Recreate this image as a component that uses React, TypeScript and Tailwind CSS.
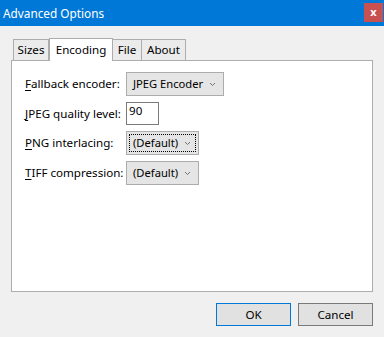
import React from "react";

const font = { fontFamily: '"Noto Sans", "Segoe UI", sans-serif' };

function Chevron() {
  return (
    <svg width="7" height="5" viewBox="0 0 7 5" className="shrink-0">
      <path d="M1 1 L3.5 3.5 L6 1" fill="none" stroke="#707070" strokeWidth="1" />
    </svg>
  );
}

function Label({ k, rest }: { k: string; rest: string }) {
  return (
    <span className="whitespace-nowrap">
      <span className="underline underline-offset-2">{k}</span>
      {rest}
    </span>
  );
}

function Combo({ text, w, focus }: { text: string; w: string; focus?: boolean }) {
  return (
    <div className={`${w} h-[24px] border border-[#acacac] bg-[#e5e5e5] p-[2px] flex`}>
      <div
        className={`flex-1 flex items-center justify-between pl-[3px] pr-[4px] whitespace-nowrap text-[11.2px] ${
          focus ? "border border-dotted border-black" : "border border-transparent"
        }`}
      >
        <span>{text}</span>
        <Chevron />
      </div>
    </div>
  );
}

export default function App() {
  return (
    <div className="w-[384px] h-[337px] bg-[#f0f0f0] flex flex-col text-[11.6px] text-black" style={font}>
      <div className="h-[26px] bg-[#0078d7] flex items-start justify-between">
        <span className="text-white pl-[3px] pt-[5px] text-[11.8px]">Advanced Options</span>
        <div className="mt-[3px] mr-[1px] w-[19px] h-[19px] bg-[#c75050] flex items-center justify-center text-white font-bold text-[11px]">
          x
        </div>
      </div>

      <div className="mt-[11px] mx-[11px] flex flex-col">
        <div className="flex items-end pl-[2px] h-[23px]">
          <div className="w-[36px] h-[21px] border border-b-0 border-[#adadad] bg-[#ebebeb] flex items-center justify-center">
            Sizes
          </div>
          <div className="w-[64px] h-[23px] -mb-px border border-b-0 border-[#adadad] bg-white flex items-start pt-[2px] justify-center relative z-10">
            Encoding
          </div>
          <div className="w-[29px] h-[21px] border border-b-0 border-l-0 border-[#adadad] bg-[#ebebeb] flex items-center justify-center">
            File
          </div>
          <div className="w-[44px] h-[21px] border border-b-0 border-l-0 border-[#adadad] bg-[#ebebeb] flex items-center justify-center">
            About
          </div>
        </div>
        <div className="h-[232px] border border-[#adadad] bg-white pl-[13px] pt-[11px]">
          <div className="grid grid-cols-[101px_auto] gap-y-[6px] items-center">
            <Label k="F" rest="allback encoder:" />
            <Combo text="JPEG Encoder" w="w-[98px]" />
            <Label k="J" rest="PEG quality level:" />
            <div className="w-[33px] h-[23px] border border-[#7a7a7a] bg-white pl-[2px] leading-[16px]">90</div>
            <Label k="P" rest="NG interlacing:" />
            <Combo text="(Default)" w="w-[73px]" focus />
            <Label k="T" rest="IFF compression:" />
            <Combo text="(Default)" w="w-[73px]" />
          </div>
        </div>
      </div>

      <div className="mt-[11px] mr-[11px] flex justify-end gap-[7px]">
        <button className="w-[75px] h-[23px] border border-[#0078d7] bg-[#e1e1e1]">OK</button>
        <button className="w-[75px] h-[23px] border border-[#7a7a7a] bg-[#e1e1e1]">Cancel</button>
      </div>
    </div>
  );
}
